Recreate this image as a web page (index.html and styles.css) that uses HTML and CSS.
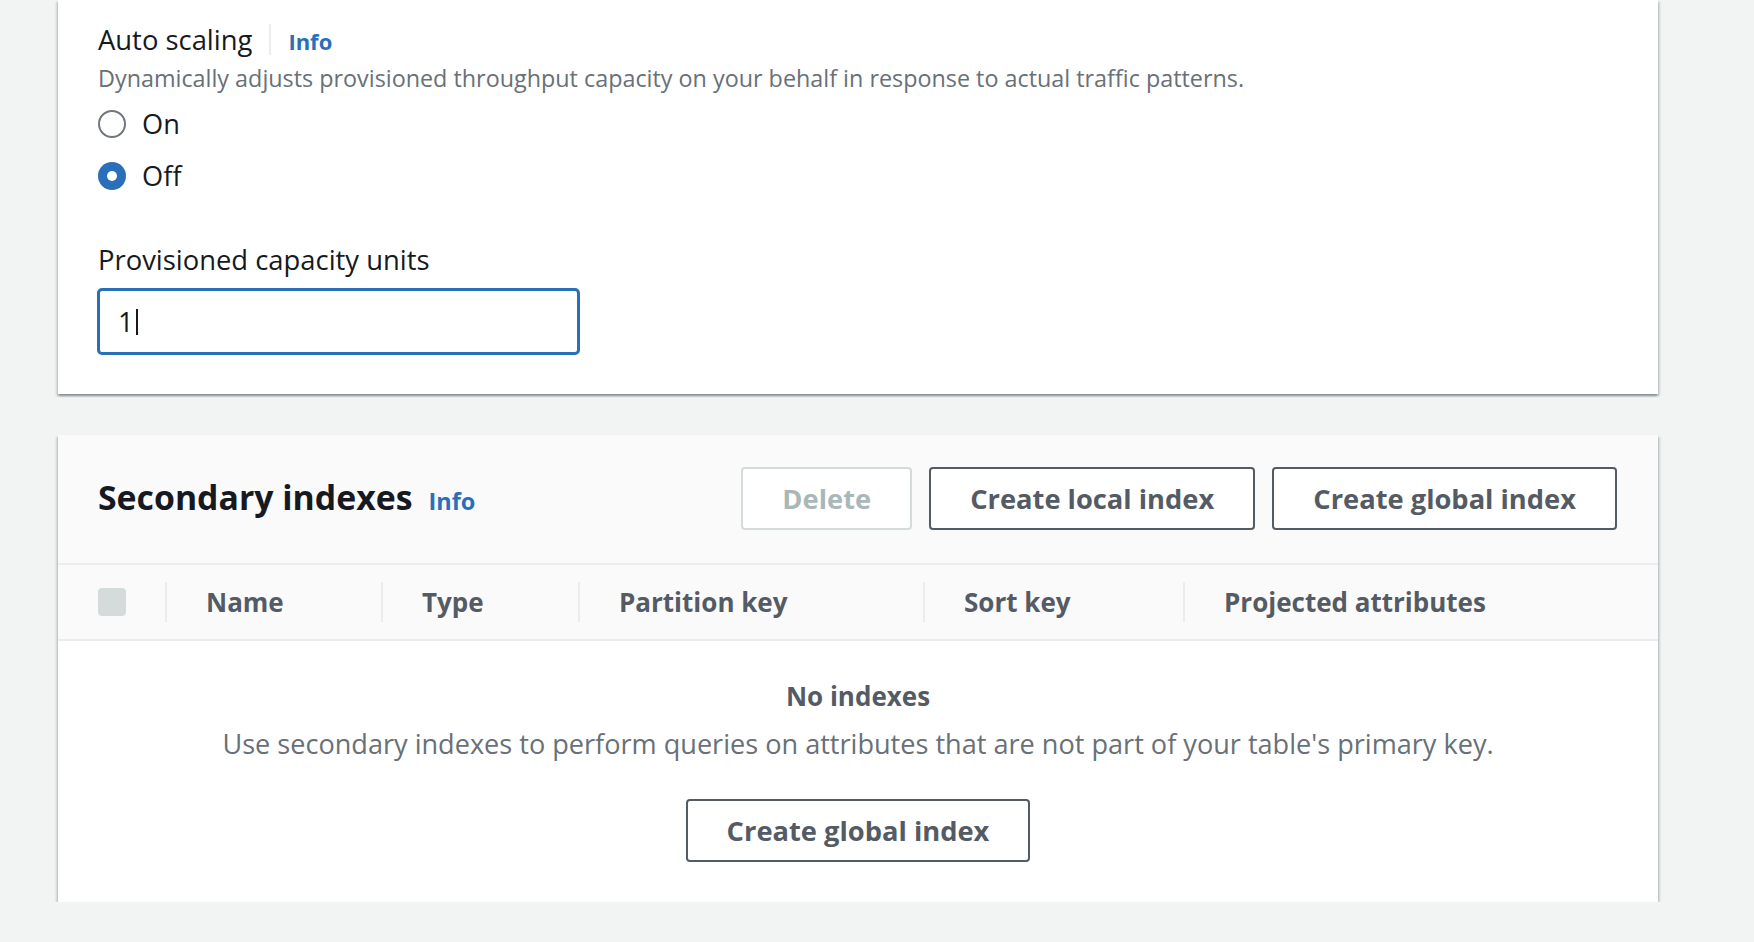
FILE: index.html
```html
<!DOCTYPE html>
<html lang="en">
<head>
<meta charset="utf-8">
<title>Capacity settings</title>
<link rel="stylesheet" href="styles.css">
</head>
<body>
<main class="page">
  <section class="panel panel-form">
    <div class="field-label-row">
      <span class="field-label">Auto scaling</span>
      <span class="label-divider"></span>
      <a class="info-link" href="#">Info</a>
    </div>
    <p class="field-desc">Dynamically adjusts provisioned throughput capacity on your behalf in response to actual traffic patterns.</p>
    <div class="radio-group">
      <label class="radio-row">
        <span class="radio"></span>
        <span class="radio-text">On</span>
      </label>
      <label class="radio-row">
        <span class="radio radio-checked"></span>
        <span class="radio-text">Off</span>
      </label>
    </div>
    <div class="field-label-row field-label-row-2">
      <span class="field-label">Provisioned capacity units</span>
    </div>
    <div class="text-input">
      <span class="input-value">1</span><span class="caret"></span>
    </div>
  </section>

  <section class="panel panel-table">
    <header class="table-header">
      <div class="table-title">
        <h2 class="title-text">Secondary indexes</h2>
        <a class="info-link info-link-title" href="#">Info</a>
      </div>
      <div class="actions">
        <button class="btn btn-disabled" type="button">Delete</button>
        <button class="btn" type="button">Create local index</button>
        <button class="btn" type="button">Create global index</button>
      </div>
    </header>
    <div class="col-header">
      <div class="col col-select"><span class="checkbox"></span></div>
      <div class="col col-name">Name</div>
      <div class="col col-type">Type</div>
      <div class="col col-pk">Partition key</div>
      <div class="col col-sk">Sort key</div>
      <div class="col col-proj">Projected attributes</div>
    </div>
    <div class="empty">
      <div class="empty-title">No indexes</div>
      <div class="empty-desc">Use secondary indexes to perform queries on attributes that are not part of your table's primary key.</div>
      <button class="btn" type="button">Create global index</button>
    </div>
  </section>
</main>
</body>
</html>
```
FILE: styles.css
```css
html, body {
  margin: 0;
  padding: 0;
  background: #f2f3f3;
}
body {
  font-family: "Open Sans", "Noto Sans", sans-serif;
  color: #16191f;
}
.page {
  padding: 0 0 0 58px;
  display: flex;
  flex-direction: column;
  gap: 41px;
}
.panel {
  width: 1600px;
  background: #ffffff;
  box-shadow: 0 2px 2px 0 rgba(0, 28, 36, 0.3), 2px 2px 2px 0 rgba(0, 28, 36, 0.12), -2px 2px 2px 0 rgba(0, 28, 36, 0.12);
}

/* ---------- form panel ---------- */
.panel-form {
  padding: 20px 40px 39px 40px;
  box-sizing: border-box;
}
.field-label-row {
  display: flex;
  align-items: baseline;
  height: 40px;
  line-height: 40px;
}
.field-label {
  font-size: 27.4px;
}
.label-divider {
  align-self: center;
  width: 2px;
  height: 31px;
  background: #eaeded;
  margin: 0 17px 0 17px;
  position: relative;
  top: -1px;
}
.info-link {
  font-size: 22px;
  font-weight: 700;
  color: #2a6fb9;
  text-decoration: none;
}
.field-desc {
  margin: 3px 0 0 0;
  font-size: 23.35px;
  line-height: 30px;
  color: #687078;
}
.radio-group {
  margin-top: 11px;
  display: flex;
  flex-direction: column;
  gap: 12px;
}
.radio-row {
  display: flex;
  align-items: center;
  height: 40px;
  gap: 16px;
}
.radio {
  width: 28px;
  height: 28px;
  box-sizing: border-box;
  border-radius: 50%;
  border: 2.5px solid #707780;
  background: #ffffff;
  position: relative;
}
.radio-checked {
  border: none;
  background: #2a6fb9;
}
.radio-checked::after {
  content: "";
  position: absolute;
  left: 9px;
  top: 9px;
  width: 10px;
  height: 10px;
  border-radius: 50%;
  background: #ffffff;
}
.radio-text {
  font-size: 27.2px;
  line-height: 40px;
}
.field-label-row-2 {
  margin-top: 44px;
}
.text-input {
  margin-top: 8px;
  margin-left: -1px;
  width: 483px;
  height: 67px;
  box-sizing: border-box;
  border: 3px solid #2a6fb9;
  border-radius: 5px;
  padding: 0 18px;
  display: flex;
  align-items: center;
  font-size: 27.2px;
  line-height: 40px;
}
.caret {
  width: 2px;
  height: 26px;
  background: #16191f;
  margin-left: 2px;
}

/* ---------- table panel ---------- */
.table-header {
  background: #fafafa;
  display: flex;
  align-items: center;
  justify-content: space-between;
  padding: 32px 41px 33px 40px;
}
.table-title {
  display: flex;
  align-items: baseline;
  gap: 16px;
  padding-bottom: 4px;
}
.title-text {
  margin: 0;
  font-size: 33.8px;
  line-height: 44px;
  font-weight: 700;
}
.info-link-title {
  font-size: 23.5px;
}
.actions {
  display: flex;
  gap: 17px;
}
.btn {
  font-family: "Open Sans", "Noto Sans", sans-serif;
  font-size: 27.3px;
  font-weight: 700;
  color: #545b64;
  background: #ffffff;
  border: 2px solid #545b64;
  border-radius: 4px;
  height: 63px;
  padding: 0 39px;
  box-sizing: border-box;
  line-height: 59px;
  cursor: pointer;
}
.btn-disabled {
  color: #aab7b8;
  border-color: #d5dbdb;
}
.col-header {
  background: #fafafa;
  border-top: 2px solid #eaeded;
  border-bottom: 2px solid #eaeded;
  height: 78px;
  box-sizing: border-box;
  display: flex;
  align-items: center;
  padding-left: 40px;
}
.col {
  position: relative;
  font-size: 26px;
  font-weight: 700;
  color: #545b64;
  line-height: 40px;
  padding-left: 41px;
  box-sizing: border-box;
}
.col::before {
  content: "";
  position: absolute;
  left: 0;
  top: 0;
  width: 2px;
  height: 40px;
  background: #eaeded;
}
.col-select {
  width: 67px;
  padding-left: 0;
  display: flex;
  align-items: center;
  height: 40px;
}
.col-select::before {
  display: none;
}
.checkbox {
  width: 28px;
  height: 28px;
  border-radius: 4px;
  background: #d5dbdb;
}
.col-name { width: 216px; }
.col-type { width: 197px; }
.col-pk { width: 345px; }
.col-sk { width: 260px; }
.col-proj { flex: 1; }

.empty {
  background: #ffffff;
  display: flex;
  flex-direction: column;
  align-items: center;
  padding: 37px 0 40px 0;
}
.empty-title {
  font-size: 26px;
  font-weight: 700;
  line-height: 36px;
  color: #545b64;
}
.empty-desc {
  margin-top: 10px;
  font-size: 27.1px;
  line-height: 40px;
  color: #687078;
}
.empty .btn {
  margin-top: 35px;
}
```
